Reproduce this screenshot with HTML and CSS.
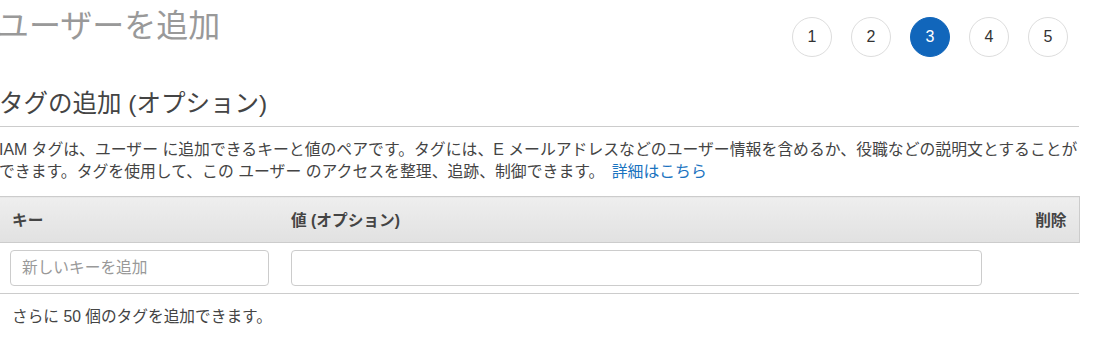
FILE: index.html
```html
<!DOCTYPE html>
<html>
<head>
    <meta charset="utf-8">
    <title>ユーザーを追加</title>
    <link rel="stylesheet" href="styles.css">
</head>
<body>
    <div class="page">
        <div class="top">
            <h1>ユーザーを追加</h1>
            <ol class="steps">
                <li>1</li>
                <li>2</li>
                <li class="active">3</li>
                <li>4</li>
                <li>5</li>
            </ol>
        </div>

        <h2>タグの追加 (オプション)</h2>
        <p class="desc">IAM タグは、ユーザー に追加できるキーと値のペアです。タグには、E メールアドレスなどのユーザー情報を含めるか、役職などの説明文とすることができます。タグを使用して、この ユーザー のアクセスを整理、追跡、制御できます。 <a href="#">詳細はこちら</a></p>

        <table class="tags">
            <colgroup>
                <col class="col-key">
                <col class="col-value">
                <col class="col-remove">
            </colgroup>
            <thead>
                <tr>
                    <th>キー</th>
                    <th>値 (オプション)</th>
                    <th>削除</th>
                </tr>
            </thead>
            <tbody>
                <tr>
                    <td><input type="text" placeholder="新しいキーを追加"></td>
                    <td><input type="text"></td>
                    <td></td>
                </tr>
            </tbody>
        </table>

        <p class="remaining">さらに 50 個のタグを追加できます。</p>
    </div>
</body>
</html>
```

FILE: styles.css
```css
body {
    margin: 0;
    font-family: "Liberation Sans", Arial, "Noto Sans CJK JP", sans-serif;
    color: #444;
    background: #fff;
}
.page {
    width: 1082px;
    margin-left: -3px;
}
.top {
    display: flex;
    justify-content: space-between;
    align-items: flex-start;
    height: 82px;
}
h1 {
    margin: 6px 0 0 0;
    font-size: 32px;
    font-weight: normal;
    color: #999;
    line-height: 40px;
}
.steps {
    list-style: none;
    margin: 17px 11px 0 0;
    padding: 0;
    display: flex;
    gap: 19px;
}
.steps li {
    width: 38px;
    height: 38px;
    border: 1px solid #ddd;
    border-radius: 50%;
    display: flex;
    align-items: center;
    justify-content: center;
    font-size: 16px;
    color: #333;
}
.steps li.active {
    background-color: #1166bb;
    border-color: #1166bb;
    color: #fff;
}
h2 {
    margin: 4px 0 0 2px;
    padding-bottom: 4px;
    font-size: 24.5px;
    font-weight: normal;
    color: #444;
    line-height: 36px;
    border-bottom: 1px solid #ccc;
}
.desc {
    margin: 12px 0 13px 0;
    padding-left: 2px;
    font-size: 15.85px;
    line-height: 22px;
    color: #444;
}
.desc a {
    margin-left: 3px;
    color: #1a73c0;
    text-decoration: none;
}
.tags {
    width: 1082px;
    table-layout: fixed;
    border-collapse: collapse;
}
.col-key {
    width: 283px;
}
.col-value {
    width: 713px;
}
.col-remove {
    width: 86px;
}
.tags th {
    height: 45px;
    padding: 0 11px;
    font-size: 15.7px;
    font-weight: bold;
    color: #444;
    text-align: left;
    background: linear-gradient(#eeeeee, #e1e1e1);
    border-top: 1px solid #ccc;
    border-bottom: 1px solid #ccc;
}
.tags th:first-child {
    padding-left: 15px;
}
.tags th:last-child {
    border-right: 1px solid #ccc;
    text-align: right;
    padding-right: 12px;
}
.tags td {
    height: 50px;
    padding: 0 11px;
    border-bottom: 1px solid #ccc;
}
.tags td:first-child {
    padding-left: 13px;
}
.tags input {
    box-sizing: border-box;
    display: block;
    width: 100%;
    height: 36px;
    padding: 0 11px;
    border: 1px solid #ccc;
    border-radius: 4px;
    font-family: "Liberation Sans", Arial, "Noto Sans CJK JP", sans-serif;
    font-size: 15.7px;
    color: #444;
}
.tags input::placeholder {
    color: #999;
}
.remaining {
    margin: 13px 0 0 15px;
    font-size: 15.7px;
    line-height: 20px;
    color: #444;
}
```
